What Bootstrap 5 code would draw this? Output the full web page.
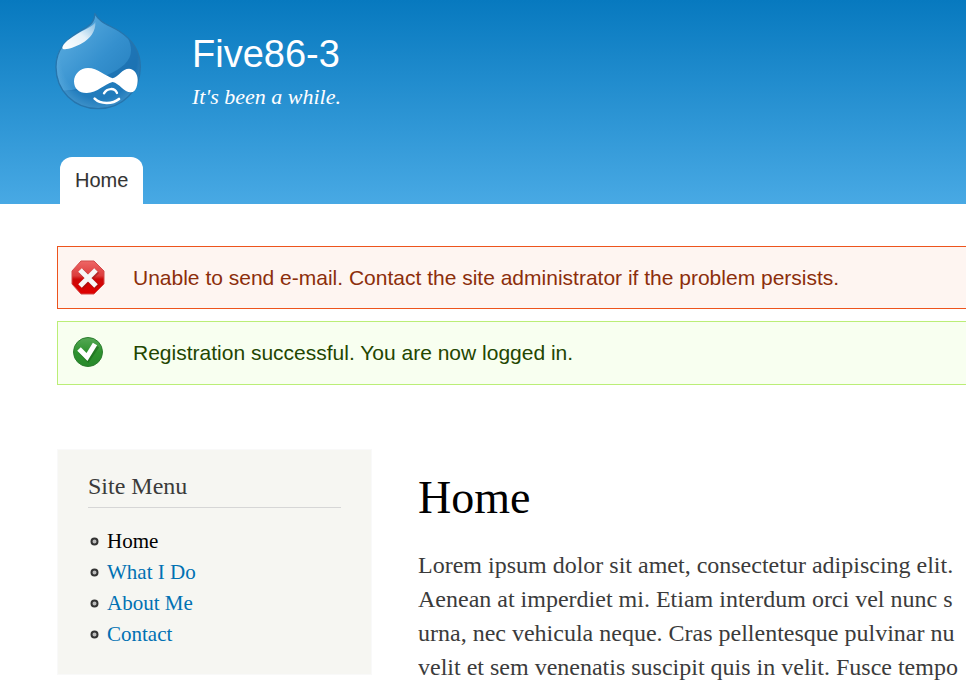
<!DOCTYPE html>
<html lang="en">
<head>
<meta charset="utf-8">
<meta name="viewport" content="width=device-width, initial-scale=1">
<title>Home | Five86-3</title>
<link href="https://cdn.jsdelivr.net/npm/bootstrap@5.3.0/dist/css/bootstrap.min.css" rel="stylesheet">
<style>
  :root { --sans: "Liberation Sans", Arial, sans-serif; --serif: "Liberation Serif", Georgia, serif; }
  body { font-family: var(--serif); color: #3b3b3b; overflow-x: hidden; }
  a { text-decoration: none; color: #0071b3; }
  .site-header { background: linear-gradient(#0779bf, #48a9e4); padding: 12px 0 0 55px; }
  .brand { gap: 49px; margin-bottom: 47px; }
  .site-name { font: 38px/44px var(--sans); margin: 20px 0 8px; }
  .site-name a, .slogan { color: #fffeff; }
  .slogan { font-size: 22px; line-height: 26px; font-style: italic; }
  .main-tabs { padding-left: 5px; }
  .main-tabs .nav-link { font: 20px/24px var(--sans); color: #333; background: #fff; border-radius: 12px 12px 0 0; padding: 11px 15px 12px; text-shadow: 0 1px #eee; }
  .messages { padding: 42px 0 0 57px; gap: 12px; }
  .message { font: 21px/26px var(--sans); border: 1px solid; border-right: 0; border-radius: 0; padding: 13px 0 13px 13px; gap: 27px; margin: 0; }
  .message svg { flex: none; }
  .message-error { color: #8c2e0b; background: #fef5f1; border-color: #ed541d; }
  .message-status { color: #234600; background: #f8fff0; border-color: #bbee77; padding-bottom: 14px; }
  .page-main { padding: 64px 0 0 57px; gap: 46px; }
  .side-menu { flex: none; width: 35%; max-width: 315px; background: #f6f6f2; border: 1px solid #f9f9f9; padding: 21px 30px 24px; }
  .side-menu h2 { font-size: 24px; line-height: 30px; border-bottom: 1px solid #d6d6d6; padding-bottom: 6px; margin: 0 0 18px; }
  .side-menu li { font-size: 21px; line-height: 31px; gap: 8px; padding-left: 2px; }
  .side-menu .active { color: #000; }
  .article { padding-top: 21px; white-space: nowrap; overflow: hidden; }
  .article h1 { font-size: 46px; line-height: 56px; color: #000; margin: 0 0 22px; }
  .article p { font-size: 24px; line-height: 34px; margin: 0; }
</style>
</head>
<body>
<header class="site-header">
  <div class="brand d-flex align-items-start">
    <a href="#" aria-label="Home page">
      <svg class="d-block" width="88" height="98" viewBox="45 36 264 294" aria-hidden="true">
        <defs>
          <linearGradient id="drop" x1="0" y1="0" x2="1" y2="1"><stop offset="0" stop-color="#66b5e5"/><stop offset=".5" stop-color="#3590ce"/><stop offset="1" stop-color="#1b75b5"/></linearGradient>
          <linearGradient id="shine" x1="1" y1="0" x2="0" y2="1"><stop offset="0" stop-color="#fff" stop-opacity=".3"/><stop offset=".45" stop-color="#fff" stop-opacity=".85"/><stop offset="1" stop-color="#fff"/></linearGradient>
          <radialGradient id="rim" cx=".5" cy=".45" r=".58"><stop offset=".75" stop-color="#8acbee" stop-opacity="0"/><stop offset="1" stop-color="#8acbee" stop-opacity=".35"/></radialGradient>
          <clipPath id="body"><path d="M164 40C165 66 151 76 124 91C84 113 48 144 48 201C48 272 102 326 174 326C248 326 301 271 301 200C301 149 276 118 237 93C207 75 177 67 164 40Z"/></clipPath>
        </defs>
        <g clip-path="url(#body)">
          <rect x="45" y="36" width="264" height="294" fill="url(#drop)"/>
          <path d="M262 110C292 170 258 199 203 224C157 246 126 272 63 272L92 330H309V110Z" fill="#1468a8" opacity=".6"/>
          <path d="M62 272C120 272 142 274 174 260L220 246L273 278C257 312 214 329 172 329C122 329 82 303 62 272Z" fill="#2583c4" opacity=".5"/>
          <rect x="45" y="36" width="264" height="294" fill="url(#rim)"/>
        </g>
        <path d="M164 40C165 66 151 76 124 91C84 113 48 144 48 201C48 272 102 326 174 326C248 326 301 271 301 200C301 149 276 118 237 93C207 75 177 67 164 40Z" fill="none" stroke="#2675ad" stroke-width="4"/>
        <path d="M166 66C160 80 130 90 108 104C82 119 63 137 68 146C76 152 104 142 126 130C150 116 168 94 166 66Z" fill="url(#shine)"/>
        <path d="M144 204C121 204 102 222 102 244C102 266 117 279 139 279C171 280 194 251 218 246C238 250 253 278 273 277C289 276 293 253 293 239C293 221 282 206 267 206C247 206 235 230 218 235C197 229 173 204 144 204Z" fill="#fff"/>
        <path d="M192 280C201 264 224 262 231 279" fill="none" stroke="#fff" stroke-width="7" stroke-linecap="round"/>
        <path d="M164 296C181 313 218 313 237 297" fill="none" stroke="#fff" stroke-width="8" stroke-linecap="round"/>
      </svg>
    </a>
    <div>
      <h1 class="site-name"><a href="#">Five86-3</a></h1>
      <div class="slogan">It's been a while.</div>
    </div>
  </div>
  <nav class="nav main-tabs" aria-label="Main menu"><a class="nav-link" href="#" aria-current="page">Home</a></nav>
</header>

<section class="messages d-flex flex-column" aria-label="Messages">
  <div class="alert message message-error d-flex align-items-center" role="alert">
    <svg width="35" height="35" viewBox="0 0 35 35" aria-hidden="true">
      <defs><linearGradient id="stop" x1="0" y1="0" x2="0" y2="1"><stop offset="0" stop-color="#e66"/><stop offset=".45" stop-color="#dc3c3c"/><stop offset=".55" stop-color="#cc0808"/><stop offset="1" stop-color="#df0000"/></linearGradient></defs>
      <path d="M10 1H23L33 11V24L23 34H10L1 24V11Z" fill="url(#stop)" stroke="#d24a4a"/>
      <path d="M10 11L26 27M26 11L10 27" stroke="#8d1717" stroke-width="6" opacity=".5"/>
      <path d="M9 10L25 26M25 10L9 26" stroke="#f7f7f7" stroke-width="5"/>
    </svg>
    <div>Unable to send e-mail. Contact the site administrator if the problem persists.</div>
  </div>
  <div class="alert message message-status d-flex align-items-center" role="status">
    <svg width="35" height="35" viewBox="0 0 35 35" aria-hidden="true">
      <defs><linearGradient id="ok" x1="0" y1="0" x2="0" y2="1"><stop offset="0" stop-color="#55a855"/><stop offset=".5" stop-color="#2f922f"/><stop offset="1" stop-color="#27892b"/></linearGradient></defs>
      <circle cx="17" cy="17" r="14.500" fill="url(#ok)" stroke="#2c7d2f"/>
      <path d="M9 16L17 24L26 11" fill="none" stroke="#186018" stroke-width="5" opacity=".5"/>
      <path d="M8 14L16 22L24 9" fill="none" stroke="#fff" stroke-width="5"/>
    </svg>
    <div>Registration successful. You are now logged in.</div>
  </div>
</section>

<div class="page-main d-flex align-items-start">
  <aside class="side-menu">
    <h2>Site Menu</h2>
    <ul class="list-unstyled mb-0">
      <li class="d-flex align-items-center"><svg width="9" height="9" viewBox="0 0 9 9" aria-hidden="true"><circle cx="4.500" cy="4.500" r="3" fill="#bbb" stroke="#333" stroke-width="2"/></svg><a class="active" href="#">Home</a></li>
      <li class="d-flex align-items-center"><svg width="9" height="9" viewBox="0 0 9 9" aria-hidden="true"><circle cx="4.500" cy="4.500" r="3" fill="#bbb" stroke="#333" stroke-width="2"/></svg><a href="#">What I Do</a></li>
      <li class="d-flex align-items-center"><svg width="9" height="9" viewBox="0 0 9 9" aria-hidden="true"><circle cx="4.500" cy="4.500" r="3" fill="#bbb" stroke="#333" stroke-width="2"/></svg><a href="#">About Me</a></li>
      <li class="d-flex align-items-center"><svg width="9" height="9" viewBox="0 0 9 9" aria-hidden="true"><circle cx="4.500" cy="4.500" r="3" fill="#bbb" stroke="#333" stroke-width="2"/></svg><a href="#">Contact</a></li>
    </ul>
  </aside>
  <main class="article flex-fill">
    <h1>Home</h1>
    <p>Lorem ipsum dolor sit amet, consectetur adipiscing elit.<br>Aenean at imperdiet mi. Etiam interdum orci vel nunc s<br>urna, nec vehicula neque. Cras pellentesque pulvinar nu<br>velit et sem venenatis suscipit quis in velit. Fusce tempo</p>
  </main>
</div>
<script src="https://cdn.jsdelivr.net/npm/bootstrap@5.3.0/dist/js/bootstrap.bundle.min.js"></script>
</body>
</html>
